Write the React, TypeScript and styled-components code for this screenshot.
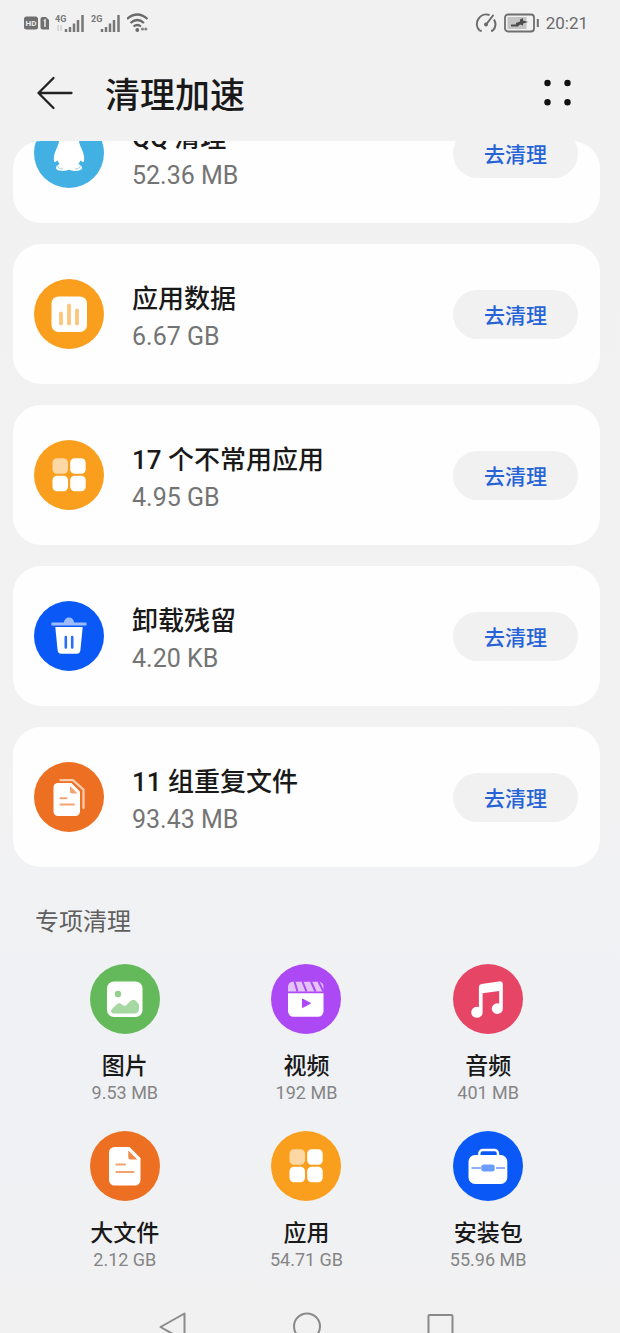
import React from "react";
import styled, { createGlobalStyle } from "styled-components";

const GlobalStyle = createGlobalStyle`
  *, *::before, *::after { box-sizing: border-box; }
  body {
    margin: 0;
    background: #f1f1f2;
    font-family: Roboto, "Noto Sans CJK SC", sans-serif;
    color: #191919;
  }
  h1, h2, h3, p, ul { margin: 0; padding: 0; }
  ul { list-style: none; }
  svg { display: block; flex: none; }
  button { font-family: inherit; cursor: pointer; }
`;

const Screen = styled.div`
  min-height: 100vh;
  display: flex;
  flex-direction: column;
  background: linear-gradient(#f1f1f1 0%, #f2f2f3 60%, #eff1f4 80%, #f1f1f2 98%);
`;

const StatusBar = styled.div`
  height: 46px;
  padding: 0 32px 0 24px;
  display: flex;
  align-items: center;
  justify-content: space-between;
`;

const StatusGroup = styled.div`
  display: flex;
  align-items: center;
  gap: 6px;
`;

const Clock = styled.time`
  font-size: 17px;
  line-height: 24px;
  color: #6b6b6b;
`;

const Header = styled.header`
  height: 95px;
  padding: 0 44px 2px 34px;
  display: flex;
  align-items: center;
  gap: 29px;
`;

const IconButton = styled.button`
  padding: 0;
  border: 0;
  background: none;
`;

const PageTitle = styled.h1`
  flex: 1;
  padding-top: 8px;
  font-size: 35px;
  line-height: 52px;
  font-weight: 500;
`;

const ScrollArea = styled.main`
  margin: 0 20px 0 13px;
  border-radius: 28px 28px 0 0;
  overflow: hidden;
`;

const CardList = styled.ul`
  margin-top: -58px;
  display: flex;
  flex-direction: column;
  gap: 21px;
`;

const Card = styled.li`
  height: 140px;
  padding: 0 22px 0 21px;
  display: flex;
  align-items: center;
  gap: 28px;
  background: #fefefe;
  border-radius: 28px;
`;

const CardText = styled.div`
  flex: 1;
  min-width: 0;
  padding-top: 8px;
`;

const CardTitle = styled.h2`
  font-size: 26px;
  line-height: 38px;
  font-weight: 500;
`;

const CardSize = styled.p`
  font-size: 25px;
  line-height: 38px;
  color: #747474;
`;

const CleanButton = styled.button`
  width: 125px;
  height: 49px;
  padding: 0;
  border: 0;
  border-radius: 25px;
  background: #f1f1f2;
  color: #2563d6;
  font-size: 21px;
  font-weight: 500;
`;

const SectionTitle = styled.h2`
  margin: 37px 22px 24px;
  font-size: 24px;
  line-height: 36px;
  font-weight: 400;
  color: #5f5f60;
`;

const CategoryGrid = styled.ul`
  padding: 0 21px;
  display: grid;
  grid-template-columns: repeat(3, 1fr);
  row-gap: 28px;
`;

const Category = styled.li`
  display: flex;
  flex-direction: column;
  align-items: center;
`;

const CategoryName = styled.h3`
  margin-top: 17px;
  font-size: 23px;
  line-height: 32px;
  font-weight: 500;
`;

const CategorySize = styled.p`
  font-size: 18px;
  line-height: 20px;
  color: #858586;
`;

const NavBar = styled.nav`
  margin-top: auto;
  padding: 0 20px 0 13px;
  display: flex;
  justify-content: center;
  gap: 106px;
`;

const Disc = ({ color, children }: { color: string; children: React.ReactNode }) => (
  <svg width="70" height="70" viewBox="0 0 70 70" aria-hidden="true">
    <circle cx="35" cy="35" r="35" fill={color} />
    {children}
  </svg>
);

const PenguinIcon = () => (
  <Disc color="#43b0e3">
    <path
      fill="#fff"
      d="M35 9c-7 0-11 5-11 12l1 3c-1 4-4 9-5 14-.5 4 0 6 1 6s2-1 3-3c.5 2 1 3.500 2 5-3 1-4 2.500-4 4 0 3 9 4 13 1.500 4 2.500 13 1.500 13-1.500 0-1.500-1-3-4-4 1-1.500 1.500-3 2-5 1 2 2 3 3 3s1.500-2 1-6c-.8-5-4-10-5-14l1-3c0-7-4-12-11-12z"
    />
    <path d="M26 24h18l3 18-4 6H27l-4-6z" fill="#fff" />
    <path d="M23 47c1 3 3 4 6 4M47 47c-1 3-3 4-6 4" stroke="#9bd5f0" strokeWidth="1" fill="none" />
  </Disc>
);

const ChartIcon = () => (
  <Disc color="#fa9f1d">
    <rect x="17.500" y="17.500" width="35.500" height="35.500" rx="7" fill="#fff" />
    <path d="M27 34.500V44.500M35 26.500V44.500M43 31.500V44.500" stroke="#fbc67c" strokeWidth="3.800" strokeLinecap="round" />
  </Disc>
);

const AppsIcon = () => (
  <Disc color="#fa9f1d">
    <rect x="18.500" y="18.300" width="15.500" height="15.500" rx="4.500" fill="#fdd8a4" />
    <g fill="#fff">
      <rect x="36.200" y="18.300" width="15.500" height="15.500" rx="4.500" />
      <rect x="18.500" y="35.800" width="15.500" height="15.500" rx="4.500" />
      <rect x="36.200" y="35.800" width="15.500" height="15.500" rx="4.500" />
    </g>
  </Disc>
);

const TrashIcon = () => (
  <Disc color="#0a59f7">
    <path d="M30 21.500a5 5 0 0 1 10 0h12.500v3h-35v-3z" fill="#9dbcfc" />
    <path d="M21.300 26h27.400l-2.300 23.200a4 4 0 0 1-4 3.500H27.600a4 4 0 0 1-4-3.500z" fill="#fff" />
    <path d="M31.800 36v10.500M38.200 36v10.500" stroke="#2c6df7" strokeWidth="2.600" strokeLinecap="round" />
  </Disc>
);

const DuplicateIcon = () => (
  <Disc color="#ed6f21">
    <path d="M26.500 18.200h12.500l10.500 9.500V46" stroke="#f9cbad" strokeWidth="2.300" fill="none" strokeLinecap="round" strokeLinejoin="round" />
    <path d="M24 21h13.500l8.500 8.500V49.500a4.500 4.500 0 0 1-4.500 4.500H24a4.500 4.500 0 0 1-4.500-4.500v-24A4.500 4.500 0 0 1 24 21z" fill="#fff" />
    <path d="M36 24v5.500q0 2 2 2h5.500z" fill="#f3a273" />
    <path d="M26.500 36.300h6M26.500 42.500h13.500" stroke="#f3a273" strokeWidth="2" strokeLinecap="round" />
  </Disc>
);

const FileIcon = () => (
  <Disc color="#ed6f21">
    <path d="M24.500 16h15l11 11v22a5.500 5.500 0 0 1-5.500 5.500H24.500a5.500 5.500 0 0 1-5.500-5.500V21.500a5.500 5.500 0 0 1 5.500-5.500z" fill="#fff" />
    <path d="M38.300 19.500v7q0 2 2 2h7z" fill="#f08b4c" />
    <path d="M26.500 33.500h8.500M26.500 41h17" stroke="#f3a273" strokeWidth="2.200" strokeLinecap="round" />
  </Disc>
);

const PictureIcon = () => (
  <Disc color="#64ba5b">
    <rect x="17" y="17.500" width="35.500" height="35.500" rx="7" fill="#fff" />
    <circle cx="28" cy="30" r="3.200" fill="#93cf8d" />
    <path d="M21 47c0-1.500 4-5 6-6.800 2-1.500 3.500-.8 5 .5 1.500 1.400 3 1.400 4.500.2l3.500-3.500c2-2 4-2 6-.3l3 3.200V45c0 3-2 4.500-4.500 4.500h-21c-1.500 0-2.500-1-2.500-2.500z" fill="#a6d8a1" />
  </Disc>
);

const VideoIcon = () => (
  <Disc color="#ac49f5">
    <path d="M22 17.800h25.500a5 5 0 0 1 5 5v4.700H17v-4.700a5 5 0 0 1 5-5z" fill="#e4c2fc" />
    <path d="M23.500 17.500l3 10M31.500 17.500l4 10M40 17.500l4.500 10M47.500 17.500l5 10" stroke="#ac49f5" strokeWidth="2" />
    <path d="M17 29.300h35.500v18a5.500 5.500 0 0 1-5.500 5.500H22.500a5.500 5.500 0 0 1-5.500-5.500z" fill="#fff" />
    <path d="M31.500 35v8.500l8-4.200z" fill="#ac49f5" stroke="#ac49f5" strokeWidth="1" strokeLinejoin="round" />
  </Disc>
);

const MusicIcon = () => (
  <Disc color="#e64566">
    <path
      fill="#fff"
      d="M28.500 20l17.500-2.600q3.800-.4 3.800 3.300V44.500a5.500 5.300 0 1 1-3.600-4.800V27L29.600 29.300V48a5.700 5.500 0 1 1-3.700-4.800V23q0-2.500 2.600-3z"
    />
  </Disc>
);

const BriefcaseIcon = () => (
  <Disc color="#0a59f7">
    <path d="M26.300 25v-2.500a3.500 3.500 0 0 1 3.500-3.500h11.700a3.500 3.500 0 0 1 3.500 3.500V25" stroke="#fff" strokeWidth="2.400" fill="none" />
    <rect x="15.500" y="24" width="38.800" height="29" rx="6.500" fill="#fff" />
    <path d="M18.500 37h9.500M43 37h9" stroke="#8db2fb" strokeWidth="2" />
    <rect x="28.300" y="33.500" width="13.400" height="7" rx="2.500" fill="#6d9dfa" />
  </Disc>
);

const BackIcon = () => (
  <svg width="42" height="36" viewBox="0 0 42 36" aria-hidden="true">
    <path d="M19.500 3L4.500 18l15 15M4.500 18H37.500" fill="none" stroke="#222" strokeWidth="2.300" strokeLinecap="round" strokeLinejoin="round" />
  </svg>
);

const MoreIcon = () => (
  <svg width="36" height="36" viewBox="0 0 36 36" aria-hidden="true">
    <g fill="#111">
      <circle cx="7.500" cy="8" r="3.200" />
      <circle cx="27.500" cy="8" r="3.200" />
      <circle cx="7.500" cy="27.300" r="3.200" />
      <circle cx="27.500" cy="27.300" r="3.200" />
    </g>
  </svg>
);

const HdIcon = () => (
  <svg width="25" height="14" viewBox="0 0 25 14" aria-hidden="true">
    <rect x="0" y=".5" width="14" height="13" rx="2.500" fill="#6f6f6f" />
    <text x="7" y="10.200" fontSize="8" fontWeight="700" textAnchor="middle" fill="#ececec">HD</text>
    <path d="M18.500 1h3.500l3 3v9.500h-6.500a2 2 0 0 1-2-2V3a2 2 0 0 1 2-2z" fill="#6f6f6f" />
    <path d="M19.800 5l1.200-1v7" stroke="#ececec" strokeWidth="1.500" fill="none" />
  </svg>
);

const SignalIcon = ({ label, data }: { label: string; data?: boolean }) => (
  <svg width="30" height="20" viewBox="0 0 30 20" aria-hidden="true">
    <text x="0" y="8.500" fontSize="9" fontWeight="700" fill="#777">{label}</text>
    {data && <path d="M3 12v6M6 12v6" stroke="#cfcfcf" strokeWidth="1.500" />}
    <path d="M11 16v3M15 14v5M19 10.500v8.500M23 7v12M27.500 2v17" stroke="#777" strokeWidth="2.500" />
  </svg>
);

const WifiIcon = () => (
  <svg width="23" height="20" viewBox="0 0 23 20" aria-hidden="true">
    <g fill="none" stroke="#6a6a6a" strokeWidth="2.200">
      <path d="M0 6Q10.300-3 20.500 6" />
      <path d="M3.500 10Q10.300 4 17 10" />
      <path d="M6.500 13.500Q10.300 10.500 14 13.500" />
    </g>
    <circle cx="10.300" cy="17" r="1.900" fill="#6a6a6a" />
    <circle cx="15.500" cy="16" r="1.600" fill="#858585" />
    <circle cx="18.800" cy="16" r="1.600" fill="#858585" />
  </svg>
);

const GaugeIcon = () => (
  <svg width="23" height="22" viewBox="0 0 23 22" aria-hidden="true">
    <path d="M4.500 18.500A9.500 9.500 0 0 1 14.500 3M19 7.500a9.500 9.500 0 0 1-1 11" fill="none" stroke="#6a6a6a" strokeWidth="2" />
    <path d="M4.500 18.800h2.200M18 18.800h-2" stroke="#6a6a6a" strokeWidth="2" />
    <path d="M18 3.500L11.500 12" stroke="#6a6a6a" strokeWidth="2" strokeLinecap="round" />
    <circle cx="11" cy="12.500" r="2" fill="#6a6a6a" />
  </svg>
);

const BatteryIcon = () => (
  <svg width="36" height="20" viewBox="0 0 36 20" aria-hidden="true">
    <rect x="1" y="1.500" width="29" height="17" rx="3" fill="none" stroke="#6f6f6f" strokeWidth="1.800" />
    <rect x="3.500" y="4" width="19" height="12" fill="#c4c4c4" />
    <path d="M7 11.500h5v-1.500l4-1.500V6.500l3-1.500v2.500l5 1.500-5 1.500v2l-3-1-2 2H7z" fill="#4c4c4c" />
    <path d="M33.800 6v8" stroke="#6f6f6f" strokeWidth="2" />
  </svg>
);

const cards = [
  { title: "QQ 清理", size: "52.36 MB", Icon: PenguinIcon },
  { title: "应用数据", size: "6.67 GB", Icon: ChartIcon },
  { title: "17 个不常用应用", size: "4.95 GB", Icon: AppsIcon },
  { title: "卸载残留", size: "4.20 KB", Icon: TrashIcon },
  { title: "11 组重复文件", size: "93.43 MB", Icon: DuplicateIcon },
];

const categories = [
  { name: "图片", size: "9.53 MB", Icon: PictureIcon },
  { name: "视频", size: "192 MB", Icon: VideoIcon },
  { name: "音频", size: "401 MB", Icon: MusicIcon },
  { name: "大文件", size: "2.12 GB", Icon: FileIcon },
  { name: "应用", size: "54.71 GB", Icon: AppsIcon },
  { name: "安装包", size: "55.96 MB", Icon: BriefcaseIcon },
];

export default function App() {
  return (
    <>
      <GlobalStyle />
      <Screen>
        <StatusBar>
          <StatusGroup>
            <HdIcon />
            <SignalIcon label="4G" data />
            <SignalIcon label="2G" />
            <WifiIcon />
          </StatusGroup>
          <StatusGroup>
            <GaugeIcon />
            <BatteryIcon />
            <Clock>20:21</Clock>
          </StatusGroup>
        </StatusBar>
        <Header>
          <IconButton aria-label="返回">
            <BackIcon />
          </IconButton>
          <PageTitle>清理加速</PageTitle>
          <IconButton aria-label="更多">
            <MoreIcon />
          </IconButton>
        </Header>
        <ScrollArea>
          <CardList>
            {cards.map(({ title, size, Icon }) => (
              <Card key={title}>
                <Icon />
                <CardText>
                  <CardTitle>{title}</CardTitle>
                  <CardSize>{size}</CardSize>
                </CardText>
                <CleanButton>去清理</CleanButton>
              </Card>
            ))}
          </CardList>
          <SectionTitle>专项清理</SectionTitle>
          <CategoryGrid>
            {categories.map(({ name, size, Icon }) => (
              <Category key={name}>
                <Icon />
                <CategoryName>{name}</CategoryName>
                <CategorySize>{size}</CategorySize>
              </Category>
            ))}
          </CategoryGrid>
        </ScrollArea>
        <NavBar>
          <IconButton aria-label="后退">
            <svg width="28" height="22" viewBox="0 0 28 22">
              <path d="M25.500 2.500L1.500 16L25.500 29.500z" fill="none" stroke="#8a8a8a" strokeWidth="2" strokeLinejoin="round" />
            </svg>
          </IconButton>
          <IconButton aria-label="主屏幕">
            <svg width="28" height="22" viewBox="0 0 28 22">
              <circle cx="14" cy="15.500" r="13" fill="none" stroke="#8a8a8a" strokeWidth="2" />
            </svg>
          </IconButton>
          <IconButton aria-label="最近任务">
            <svg width="28" height="22" viewBox="0 0 28 22">
              <rect x="1.500" y="4" width="24" height="24" rx="1" fill="none" stroke="#8a8a8a" strokeWidth="2" />
            </svg>
          </IconButton>
        </NavBar>
      </Screen>
    </>
  );
}
